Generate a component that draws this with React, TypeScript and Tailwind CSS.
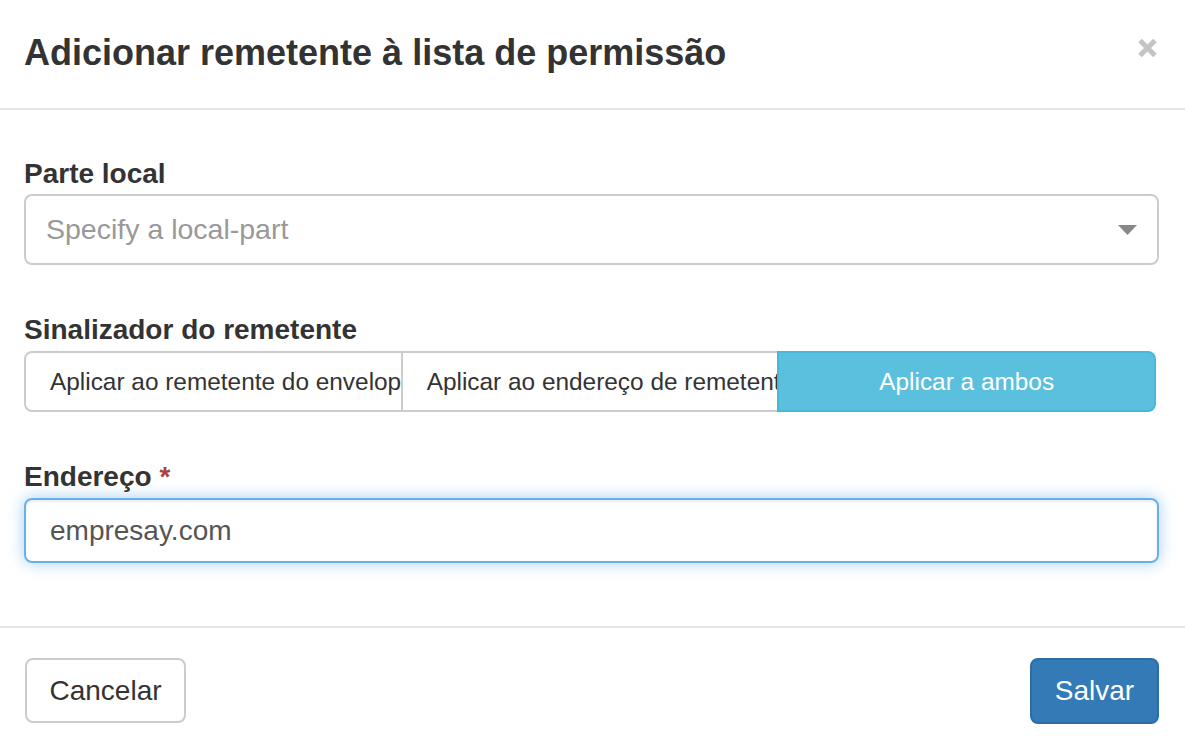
import React from "react";

export default function App() {
  const font = { fontFamily: '"Liberation Sans", Arial, Helvetica, sans-serif' };
  return (
    <div className="w-[1185px] h-[749px] bg-white overflow-hidden text-[#333]" style={font}>
      {/* Header */}
      <div className="h-[110px] border-b-2 border-[#e5e5e5] flex items-start justify-between pl-[24px] pr-[27px] pt-[33px]">
        <h4 className="text-[36px] leading-[40px] font-bold text-[#333]">
          Adicionar remetente à lista de permissão
        </h4>
        <button className="mt-[5px] w-[21px] h-[20px] flex items-center justify-center" aria-label="Close">
          <svg width="21" height="20" viewBox="0 0 21 20">
            <path d="M3 2.5 L18 17.5 M18 2.5 L3 17.5" stroke="#c4c4c4" strokeWidth="5" strokeLinecap="butt" />
          </svg>
        </button>
      </div>

      {/* Body */}
      <div className="pt-[48px] pb-[63px] pl-[24px] pr-[26px]">
        <div>
          <label className="block text-[28px] leading-[32px] font-bold mb-[4px]">Parte local</label>
          <div className="h-[71px] border-2 border-[#ccc] rounded-[8px] flex items-center justify-between pl-[20px] pr-[20px]">
            <span className="text-[28.5px] text-[#999]">Specify a local-part</span>
            <svg width="19" height="10" viewBox="0 0 19 10">
              <path d="M0 0 L19 0 L9.5 10 Z" fill="#888" />
            </svg>
          </div>
        </div>

        <div className="mt-[49px]">
          <label className="block text-[28px] leading-[32px] font-bold mb-[5px]">Sinalizador do remetente</label>
          <div className="flex w-[1132px] h-[61px]">
            <button className="flex-1 min-w-0 h-full border-2 border-[#ccc] rounded-l-[8px] bg-white px-[24px] pt-[1px] overflow-hidden whitespace-nowrap text-[24.4px] text-[#333] text-center">
              Aplicar ao remetente do envelope
            </button>
            <button className="flex-1 min-w-0 h-full border-2 border-l-0 border-r-0 border-[#ccc] bg-white pl-[24px] pr-[24px] pt-[1px] overflow-hidden whitespace-nowrap text-[24.4px] text-[#333] text-center">
              Aplicar ao endereço de remetente
            </button>
            <button className="flex-1 min-w-0 h-full border-2 border-[#46b8da] rounded-r-[8px] bg-[#5bc0de] px-[24px] pt-[1px] overflow-hidden whitespace-nowrap text-[24.4px] text-white text-center">
              Aplicar a ambos
            </button>
          </div>
        </div>

        <div className="mt-[49px]">
          <label className="block text-[28px] leading-[32px] font-bold mb-[5px]">
            Endereço <span className="text-[#a94442]">*</span>
          </label>
          <div className="h-[65px] border-2 border-[#66afe9] rounded-[8px] flex items-center px-[24px] shadow-[0_0_16px_rgba(102,175,233,0.6),inset_0_2px_2px_rgba(0,0,0,0.075)]">
            <span className="text-[28px] text-[#555]">empresay.com</span>
          </div>
        </div>
      </div>

      {/* Footer */}
      <div className="border-t-2 border-[#e5e5e5] pt-[30px] pl-[25px] pr-[26px] flex justify-between">
        <button className="h-[65px] w-[161px] border-2 border-[#ccc] rounded-[8px] bg-white text-[28px] text-[#333]">
          Cancelar
        </button>
        <button className="h-[66px] w-[129px] border-2 border-[#2e6da4] rounded-[8px] bg-[#337ab7] text-[28px] text-white">
          Salvar
        </button>
      </div>
    </div>
  );
}
